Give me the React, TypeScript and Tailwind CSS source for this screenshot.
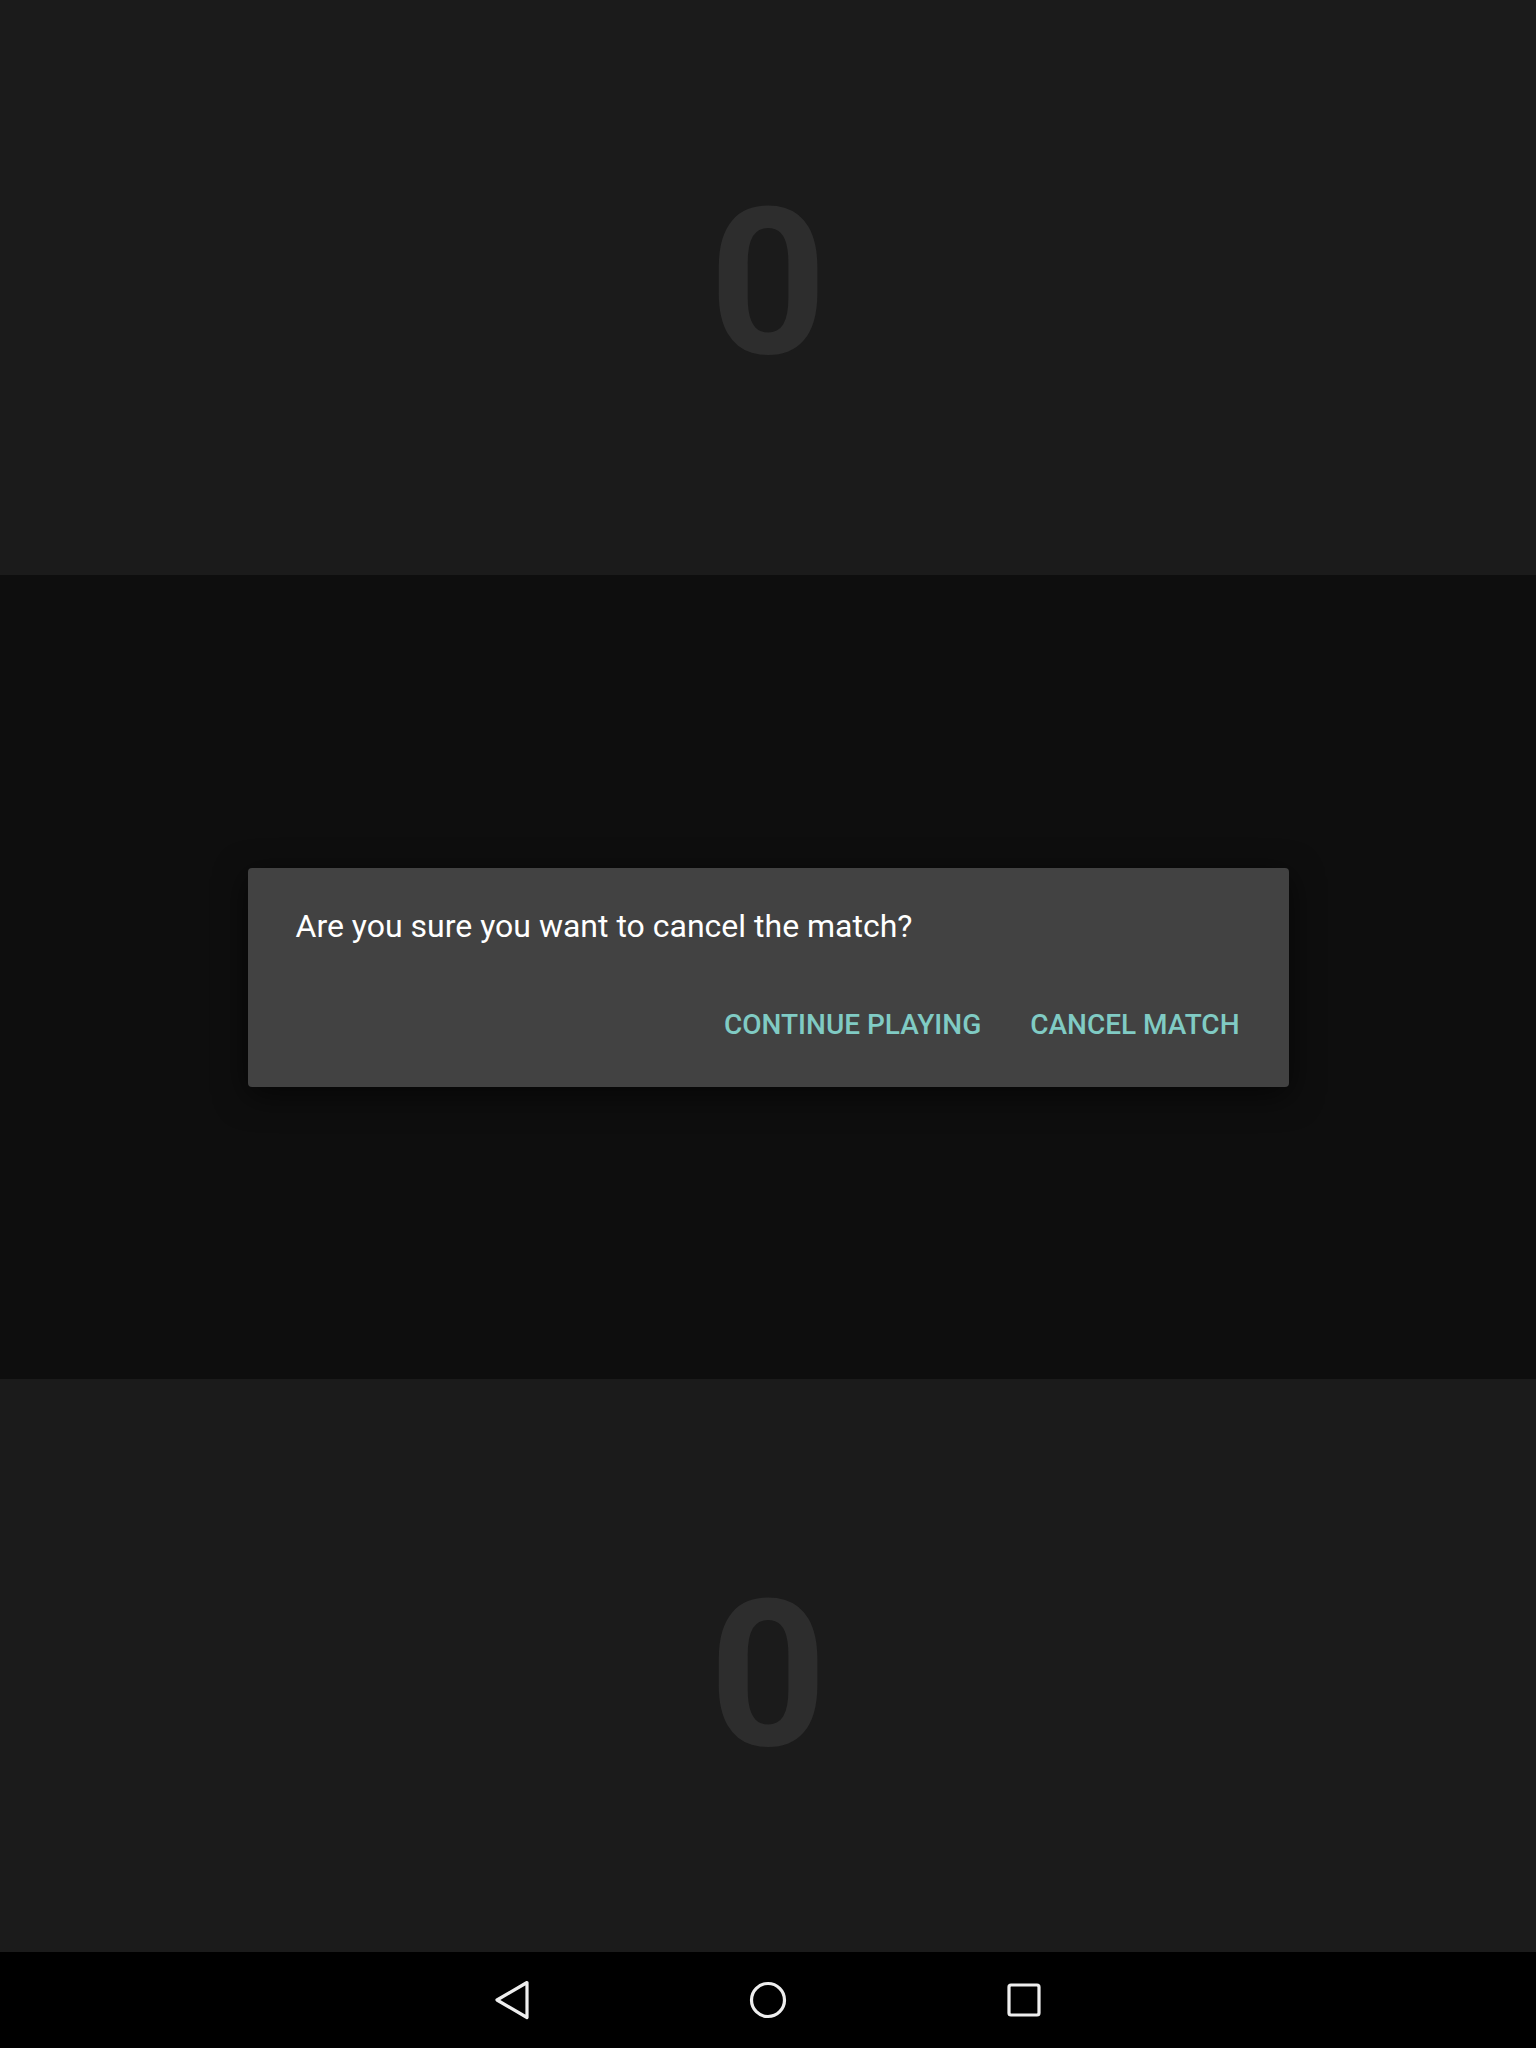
import React from "react";

export default function App() {
  const font = { fontFamily: "Roboto, 'Noto Sans', sans-serif" };
  return (
    <div className="w-[1536px] h-[2048px] flex flex-col overflow-hidden" style={font}>
      <div className="h-[575px] bg-[#1b1b1b] flex items-center justify-center pb-[8px]">
        <span className="text-[205px] leading-none font-bold text-[#2d2d2d]">0</span>
      </div>
      <div className="h-[804px] bg-[#0e0e0e] flex items-center justify-center">
        <div className="w-[1041px] h-[219px] bg-[#424242] rounded-[4px] shadow-[0_8px_32px_rgba(0,0,0,0.6)] flex flex-col">
          <div className="pl-[48px] pt-[40px] text-[32px] leading-[37px] text-white">
            Are you sure you want to cancel the match?
          </div>
          <div className="mt-[64px] flex justify-end pr-[49px] gap-[49px] text-[28px] leading-[32px] font-medium text-[#80cbc4]">
            <span>CONTINUE PLAYING</span>
            <span>CANCEL MATCH</span>
          </div>
        </div>
      </div>
      <div className="h-[573px] bg-[#1b1b1b] flex items-center justify-center pt-[19px]">
        <span className="text-[205px] leading-none font-bold text-[#2d2d2d]">0</span>
      </div>
      <div className="h-[96px] bg-black flex items-center justify-center">
        <div className="flex items-center justify-center gap-[216px]">
          <svg width="40" height="40" viewBox="0 0 40 40" fill="none">
            <path d="M35 2.5 L5 20 L35 37.5 Z" stroke="#eeeeee" strokeWidth="3.2" strokeLinejoin="round" />
          </svg>
          <svg width="40" height="40" viewBox="0 0 40 40" fill="none">
            <circle cx="20" cy="20" r="16.5" stroke="#eeeeee" strokeWidth="3.2" />
          </svg>
          <svg width="40" height="40" viewBox="0 0 40 40" fill="none">
            <rect x="5" y="5" width="30" height="30" rx="2" stroke="#eeeeee" strokeWidth="3.2" />
          </svg>
        </div>
      </div>
    </div>
  );
}
